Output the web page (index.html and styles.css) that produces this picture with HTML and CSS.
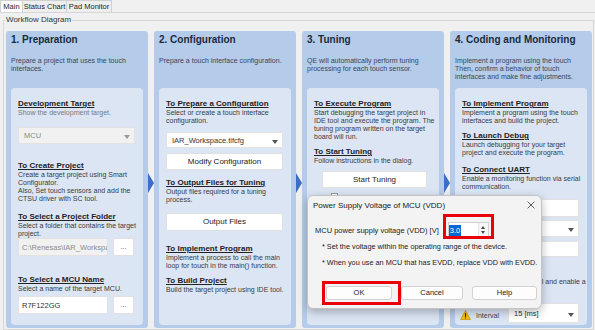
FILE: index.html
```html
<!DOCTYPE html>
<html lang="en">
<head>
    <meta charset="UTF-8">
    <meta name="viewport" content="width=device-width, initial-scale=1.0">
    <title>QE for Capacitive Touch</title>
    <link rel="stylesheet" href="styles.css">
</head>
<body>
    <div class="tabs">
        <div class="tab active tab-main">Main</div>
        <div class="tab tab-status">Status Chart</div>
        <div class="tab tab-pad">Pad Monitor</div>
    </div>

    <fieldset class="workflow">
        <legend>Workflow Diagram</legend>
        <div class="flow">
            <section class="step">
                <h2>1. Preparation</h2>
                <p class="lead">Prepare a project that uses the touch<br>interfaces.</p>
                <div class="box">
                    <h3 class="first">Development Target</h3>
                    <p class="muted">Show the development target.</p>
                    <div class="select disabled mt-10">MCU</div>

                    <h3 class="mt-17">To Create Project</h3>
                    <p>Create a target project using Smart<br>Configurator.<br>Also, Set touch sensors and add the<br>CTSU driver with SC tool.</p>

                    <h3 class="mt-9">To Select a Project Folder</h3>
                    <p>Select a folder that contains the target<br>project.</p>
                    <div class="field">
                        <div class="text disabled">C:\Renesas\IAR_Workspac</div>
                        <div class="btn small">...</div>
                    </div>

                    <h3 class="mt-19">To Select a MCU Name</h3>
                    <p>Select a name of the target MCU.</p>
                    <div class="field mt-3">
                        <div class="text">R7F122GG</div>
                        <div class="btn small">...</div>
                    </div>
                </div>
            </section>

            <div class="arrow"></div>

            <section class="step">
                <h2>2. Configuration</h2>
                <p class="lead">Prepare a touch interface configuration.</p>
                <div class="box">
                    <h3 class="first">To Prepare a Configuration</h3>
                    <p>Select or create a touch interface<br>configuration.</p>
                    <div class="select cfg-select mt-7">IAR_Workspace.tifcfg</div>
                    <div class="btn wide mt-5">Modify Configuration</div>

                    <h3 class="mt-8">To Output Files for Tuning</h3>
                    <p>Output files required for a tuning<br>process.</p>
                    <div class="btn wide tall mt-9">Output Files</div>

                    <h3 class="mt-13">To Implement Program</h3>
                    <p>Implement a process to call the main<br>loop for touch in the main() function.</p>

                    <h3 class="mt-6">To Build Project</h3>
                    <p>Build the target project using IDE tool.</p>
                </div>
            </section>

            <div class="arrow"></div>

            <section class="step">
                <h2>3. Tuning</h2>
                <p class="lead">QE will automatically perform tuning<br>processing for each touch sensor.</p>
                <div class="box">
                    <h3 class="first">To Execute Program</h3>
                    <p>Start debugging the target project in<br>IDE tool and execute the program. The<br>tuning program written on the target<br>board will run.</p>

                    <h3 class="mt-6">To Start Tuning</h3>
                    <p>Follow instructions in the dialog.</p>
                    <div class="btn tuning-btn mt-6">Start Tuning</div>
                    <label class="check"><span class="checkbox"></span><span class="check-text">Tune automatically</span></label>
                </div>
            </section>

            <div class="arrow"></div>

            <section class="step">
                <h2>4. Coding and Monitoring</h2>
                <p class="lead">Implement a program using the touch<br>Then, confirm a behavior of touch<br>interfaces and make fine adjustments.</p>
                <div class="box">
                    <h3 class="first">To Implement Program</h3>
                    <p>Implement a program using the touch<br>interfaces and build the project.</p>

                    <h3 class="mt-6">To Launch Debug</h3>
                    <p>Launch debugging for your target<br>project and execute the program.</p>

                    <h3 class="mt-8">To Connect UART</h3>
                    <p>Enable a monitoring function via serial<br>communication.</p>
                    <div class="text uart-text mt-8">COM3</div>
                    <div class="select uart-select mt-3">115200 bps</div>
                    <div class="text uart-text short mt-4">Connect</div>

                    <p class="mt-21">Set the monitoring interval and enable a<br>monitor.</p>
                    <div class="interval mt-9">
                        <svg class="warn" width="11" height="10" viewBox="0 0 11 10">
                            <path d="M5.5 0.5L10.5 9.5H0.5Z" fill="#f2c200" stroke="#b58f00" stroke-width="0.6"/>
                            <rect x="5" y="3.2" width="1" height="3.6" fill="#222"/>
                            <rect x="5" y="7.5" width="1" height="1" fill="#222"/>
                        </svg>
                        <span class="interval-label">Interval</span>
                        <div class="select interval-select">15 [ms]</div>
                    </div>
                </div>
            </section>
        </div>
    </fieldset>

    <div class="dialog">
        <div class="dlg-title">
            <span>Power Supply Voltage of MCU (VDD)</span>
            <svg class="close" width="8" height="8" viewBox="0 0 8 8">
                <path d="M0.6 0.6L7.4 7.4M7.4 0.6L0.6 7.4" stroke="#333" stroke-width="0.8"/>
            </svg>
        </div>
        <div class="dlg-body">
            <div class="volt-row">
                <span>MCU power supply voltage (VDD) [V]</span>
                <div class="spin">
                    <span class="spin-value"><span class="selected">3.0</span></span>
                    <span class="spin-buttons">
                        <span class="up"></span>
                        <span class="down"></span>
                    </span>
                </div>
            </div>
            <p class="note first-note">* Set the voltage within the operating range of the device.</p>
            <p class="note">* When you use an MCU that has EVDD, replace VDD with EVDD.</p>
            <div class="dlg-buttons">
                <div class="btn dlg-btn ok">OK</div>
                <div class="btn dlg-btn cancel">Cancel</div>
                <div class="btn dlg-btn help">Help</div>
            </div>
        </div>
    </div>

    <div class="mark mark-volt"></div>
    <div class="mark mark-ok"></div>
</body>
</html>
```

FILE: styles.css
```css
* {
    box-sizing: border-box;
}
body {
    margin: 0;
    height: 330px;
    overflow: hidden;
    position: relative;
    background-color: #f0f0f0;
    font-family: "Liberation Sans", Arial, sans-serif;
    color: #2b2b2b;
}

/* tab strip */
.tabs {
    display: flex;
    height: 13px;
    border-bottom: 1px solid #d6d6d6;
}
.tab {
    font-size: 7.5px;
    line-height: 12px;
    text-align: center;
    white-space: nowrap;
    border: 1px solid #d0d0d0;
    border-bottom: none;
    margin-right: -1px;
    background-color: #eeeeee;
    color: #1e1e1e;
}
.tab.active {
    background-color: #fff;
}
.tab-main { width: 23px; }
.tab-status { width: 45px; }
.tab-pad { width: 46px; }

/* group box */
.workflow {
    margin: 2px 1px 0 3px;
    padding: 6px 1px 1px 2px;
    border: 1px solid #d8d8d8;
    min-width: 0;
}
.workflow legend {
    font-size: 8px;
    line-height: 10px;
    padding: 0 1px;
    margin-left: -1px;
    color: #333;
}
.flow {
    display: flex;
    align-items: center;
    height: 297px;
}
.arrow {
    width: 0;
    height: 0;
    margin-top: 7px;
    border-top: 10px solid transparent;
    border-bottom: 10px solid transparent;
    border-left: 6px solid #3b6ec6;
}

/* step columns */
.step {
    width: 142px;
    height: 100%;
    display: flex;
    flex-direction: column;
    padding: 3px 5px;
    background-color: #b4cbea;
    border-radius: 3px;
}
.step h2 {
    margin: 0;
    font-size: 10px;
    line-height: 12px;
    color: #1b2a3d;
    white-space: nowrap;
}
.lead {
    margin: 11px 0 7px;
    height: 24px;
    font-size: 7px;
    line-height: 8px;
    color: #3a4758;
    white-space: nowrap;
}
.box {
    flex: 1;
    padding: 0 8px 0 7px;
    background-color: #dbe5f4;
    border-radius: 4px;
}
.box h3 {
    margin: 0;
    font-size: 8px;
    line-height: 10px;
    text-decoration: underline;
    color: #222;
    white-space: nowrap;
}
.box h3.first {
    margin-top: 11px;
}
.box p {
    margin: 0;
    font-size: 7px;
    line-height: 8px;
    color: #3b3b3b;
    white-space: nowrap;
}
.box p.muted {
    color: #7a7a7a;
}

.mt-3 { margin-top: 3px !important; }
.mt-4 { margin-top: 4px !important; }
.mt-5 { margin-top: 5px !important; }
.mt-6 { margin-top: 6px !important; }
.mt-7 { margin-top: 7px !important; }
.mt-8 { margin-top: 8px !important; }
.mt-9 { margin-top: 9px !important; }
.mt-10 { margin-top: 10px !important; }
.mt-13 { margin-top: 13px !important; }
.mt-17 { margin-top: 17px !important; }
.mt-19 { margin-top: 19px !important; }
.mt-21 { margin-top: 21px !important; }

/* controls */
.select, .text {
    position: relative;
    height: 17px;
    padding-left: 5px;
    font-size: 7.5px;
    line-height: 16px;
    color: #333;
    background-color: #fff;
    border: 1px solid #e2e2e2;
    white-space: nowrap;
    overflow: hidden;
}
.select::after {
    content: "";
    position: absolute;
    right: 4px;
    top: 7px;
    border-left: 3px solid transparent;
    border-right: 3px solid transparent;
    border-top: 4px solid #555;
}
.disabled {
    background-color: #f1f1f1;
    color: #8a8a8a;
}
.select.disabled::after {
    border-top-color: #9a9a9a;
}
.cfg-select {
    height: 16px;
    line-height: 15px;
}
.field {
    display: flex;
    gap: 5px;
    height: 18px;
}
.field .text {
    width: 90px;
    height: 18px;
    line-height: 17px;
    padding-left: 3px;
}
.btn {
    height: 17px;
    font-size: 8px;
    line-height: 15px;
    text-align: center;
    color: #222;
    background-color: #fff;
    border: 1px solid #e0e0e0;
    border-radius: 2px;
    white-space: nowrap;
}
.btn.small {
    width: 21px;
    height: 18px;
    line-height: 16px;
    font-size: 7px;
    color: #555;
}
.btn.tall {
    height: 18px;
    line-height: 16px;
}
.tuning-btn {
    width: 105px;
    margin-left: 8px;
}
.check {
    display: flex;
    align-items: flex-start;
    gap: 4px;
    margin: 5px 0 0 17px;
    font-size: 7px;
    color: #333;
    white-space: nowrap;
}
.checkbox {
    width: 7px;
    height: 7px;
    background-color: #fff;
    border: 1px solid #999;
}
.check-text {
    padding-top: 3px;
}
.uart-text {
    height: 18px;
}
.uart-text.short {
    height: 16px;
    line-height: 15px;
}
.uart-select {
    height: 17px;
}
.interval {
    display: flex;
    align-items: center;
    height: 20px;
}
.warn {
    margin-left: -2px;
    margin-top: 4px;
}
.interval-label {
    margin-left: 5px;
    margin-top: 4px;
    width: 32px;
    font-size: 7px;
    color: #444;
}
.interval-select {
    flex: 1;
    height: 20px;
    line-height: 19px;
}
.interval-select::after {
    top: 9px;
}

/* dialog window */
.dialog {
    position: absolute;
    left: 307px;
    top: 195px;
    width: 235px;
    height: 114px;
    background-color: #f3f3f3;
    border: 1px solid #c4c4c4;
    border-radius: 6px;
    box-shadow: 0 3px 10px rgba(0, 0, 0, 0.28);
}
.dlg-title {
    display: flex;
    align-items: center;
    justify-content: space-between;
    height: 18px;
    padding: 0 6px 0 5px;
    font-size: 8px;
    color: #1a1a1a;
}
.dlg-body {
    padding: 7px 0 0 7px;
    font-size: 7.5px;
    color: #222;
}
.volt-row {
    display: flex;
    align-items: center;
    height: 18px;
}
.spin {
    display: flex;
    width: 41px;
    height: 17px;
    margin-left: 9px;
    background-color: #fff;
    border: 1px solid #d0d0d0;
}
.spin-value {
    flex: 1;
    padding: 2px 0 0 0;
}
.selected {
    display: inline-block;
    height: 12px;
    padding: 0 1px;
    line-height: 12px;
    color: #fff;
    background-color: #0a64d2;
}
.spin-buttons {
    display: flex;
    flex-direction: column;
    justify-content: center;
    gap: 2px;
    width: 10px;
    background-color: #f6f6f6;
    border-left: 1px solid #e3e3e3;
}
.spin-buttons span {
    width: 0;
    height: 0;
    margin-left: 2px;
    border-left: 2.5px solid transparent;
    border-right: 2.5px solid transparent;
}
.spin-buttons .up {
    border-bottom: 3px solid #444;
}
.spin-buttons .down {
    border-top: 3px solid #444;
}
.note {
    margin: 6px 0 0 7px;
    font-size: 7.3px;
    line-height: 10px;
    white-space: nowrap;
}
.note.first-note {
    margin-top: 3px;
}
.dlg-buttons {
    display: flex;
    gap: 9px;
    margin: 18px 0 0 11px;
}
.dlg-btn {
    height: 14px;
    line-height: 12px;
    font-size: 7.5px;
    background-color: #fdfdfd;
    border: 1px solid #d2d2d2;
    border-radius: 3px;
}
.ok { width: 66px; }
.cancel { width: 62px; }
.help { width: 65px; }

/* red annotation frames */
.mark {
    position: absolute;
    border: 3px solid #e8000b;
}
.mark-volt {
    left: 443px;
    top: 214px;
    width: 51px;
    height: 25px;
}
.mark-ok {
    left: 322px;
    top: 281px;
    width: 79px;
    height: 24px;
}
```
